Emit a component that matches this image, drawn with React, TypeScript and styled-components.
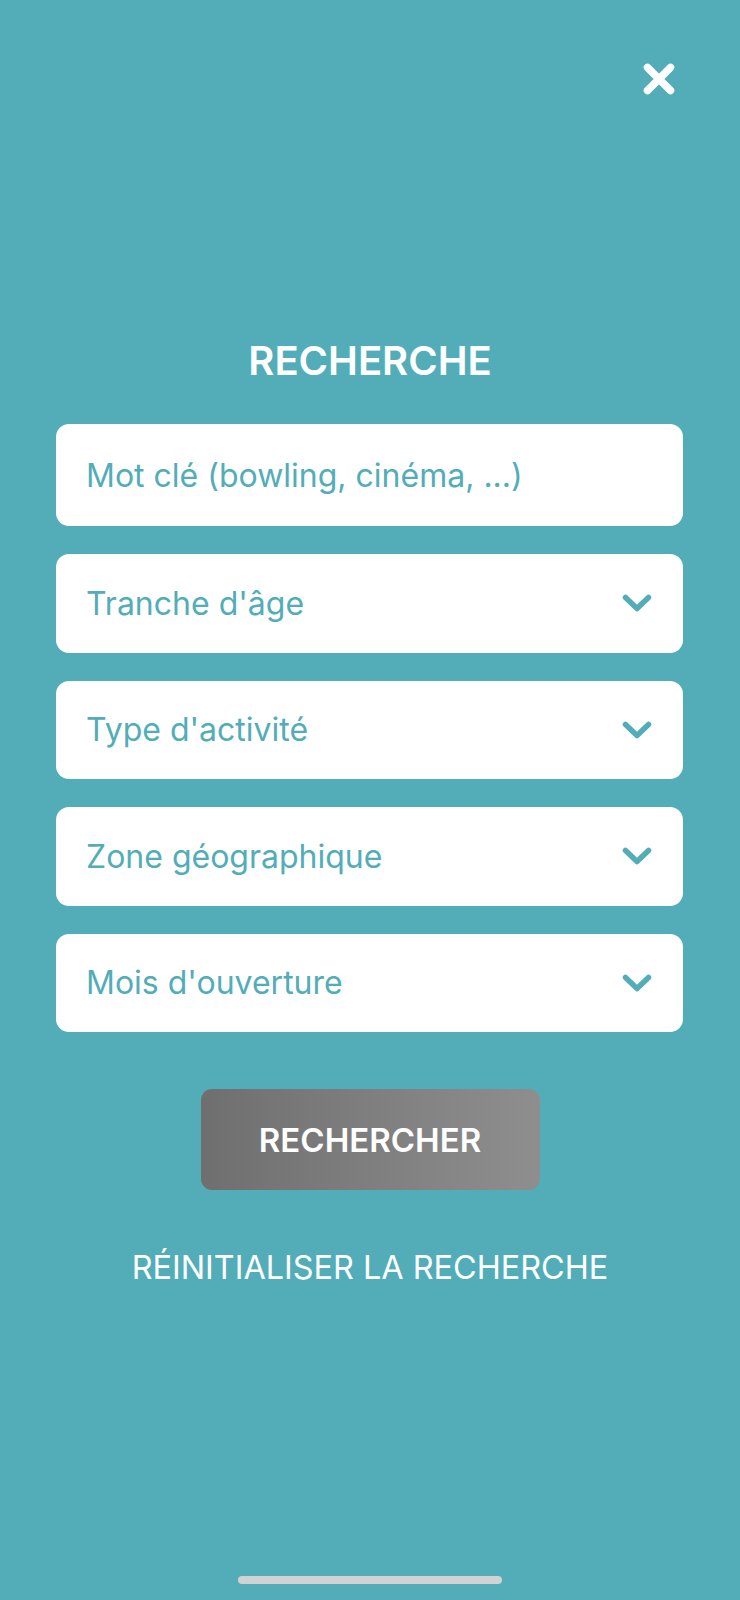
import React from "react";
import styled, { createGlobalStyle } from "styled-components";

const TEAL = "#52adb8";

const Global = createGlobalStyle`
  html, body { margin: 0; padding: 0; background: ${TEAL}; }
  body { font-family: "Inter", "Roboto", "Liberation Sans", sans-serif; }
  * { box-sizing: border-box; }
`;

const Page = styled.div`
  min-height: 1600px;
  background: ${TEAL};
  display: flex;
  flex-direction: column;
`;

const TopBar = styled.div`
  display: flex;
  justify-content: flex-end;
  padding: 63px 65px 0 0;
`;

const CloseButton = styled.button`
  width: 32px;
  height: 32px;
  padding: 0;
  border: none;
  background: transparent;
  display: flex;
  cursor: pointer;
`;

const Title = styled.h1`
  margin: 243px 0 0;
  text-align: center;
  color: #ffffff;
  font-size: 40px;
  line-height: 46px;
  font-weight: 600;
  letter-spacing: 0;
`;

const Form = styled.div`
  display: flex;
  flex-direction: column;
  gap: 28px;
  padding: 0 57px 0 56px;
  margin-top: 40px;
`;

const Field = styled.div<{ $tall?: boolean }>`
  height: ${(p) => (p.$tall ? 102 : 98.5)}px;
  background: #ffffff;
  border-radius: 13px;
  display: flex;
  align-items: center;
  justify-content: space-between;
  padding: 0 31px 0 30px;
`;

const FieldText = styled.span`
  color: ${TEAL};
  font-size: 32px;
  font-weight: 400;
`;

const Actions = styled.div`
  display: flex;
  flex-direction: column;
  align-items: center;
  margin-top: 57px;
`;

const SearchButton = styled.button`
  width: 339px;
  height: 101px;
  border: none;
  border-radius: 11px;
  background: linear-gradient(90deg, #6f6f6f 0%, #8e8e8e 100%);
  color: #ffffff;
  font-family: inherit;
  font-size: 33px;
  font-weight: 600;
  cursor: pointer;
`;

const ResetLink = styled.button`
  margin-top: 57px;
  border: none;
  background: transparent;
  color: #ffffff;
  font-family: inherit;
  font-size: 32.4px;
  line-height: 40px;
  font-weight: 400;
  cursor: pointer;
`;

const HomeIndicator = styled.div`
  margin: auto auto 16px;
  width: 264px;
  height: 8px;
  border-radius: 4px;
  background: #d0d3d2;
`;

const Chevron = () => (
  <svg width="30" height="18" viewBox="0 0 30 18" fill="none">
    <path
      d="M3.5 3.5 L15 14.5 L26.5 3.5"
      stroke={TEAL}
      strokeWidth="5.5"
      strokeLinecap="round"
      strokeLinejoin="round"
    />
  </svg>
);

const CloseIcon = () => (
  <svg width="32" height="32" viewBox="0 0 32 32" fill="none">
    <path
      d="M4.5 4.5 L27.5 27.5 M27.5 4.5 L4.5 27.5"
      stroke="#ffffff"
      strokeWidth="7.5"
      strokeLinecap="round"
    />
  </svg>
);

const selects = [
  "Tranche d'âge",
  "Type d'activité",
  "Zone géographique",
  "Mois d'ouverture",
];

export default function App() {
  return (
    <>
      <Global />
      <Page>
        <TopBar>
          <CloseButton aria-label="Fermer">
            <CloseIcon />
          </CloseButton>
        </TopBar>
        <Title>RECHERCHE</Title>
        <Form>
          <Field $tall>
            <FieldText>Mot clé (bowling, cinéma, ...)</FieldText>
          </Field>
          {selects.map((s) => (
            <Field key={s}>
              <FieldText>{s}</FieldText>
              <Chevron />
            </Field>
          ))}
        </Form>
        <Actions>
          <SearchButton>RECHERCHER</SearchButton>
          <ResetLink>RÉINITIALISER LA RECHERCHE</ResetLink>
        </Actions>
        <HomeIndicator />
      </Page>
    </>
  );
}
